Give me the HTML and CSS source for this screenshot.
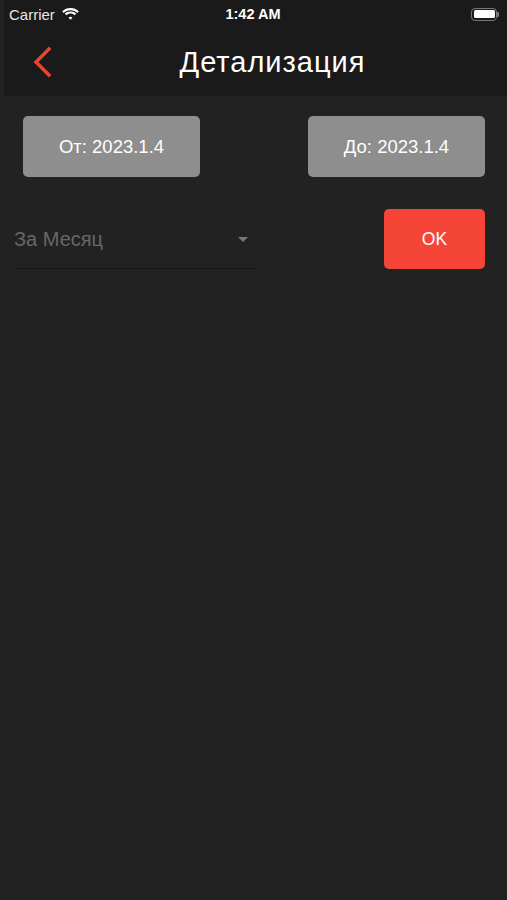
FILE: index.html
```html
<!DOCTYPE html>
<html>
    <head>
        <meta charset="utf-8">
        <link rel="stylesheet" href="styles.css">
    </head>
    <body>
        <div id="header">
            <div id="status">
                <div class="status-left">
                    <span>Carrier</span>
                    <svg width="19" height="14" viewBox="0 0 19 14">
                        <path d="M9.5 3.2c2.6 0 5 1 6.8 2.7l1.5-1.6C15.6 2.2 12.7 1 9.5 1S3.4 2.2 1.2 4.3l1.5 1.6C4.5 4.2 6.9 3.2 9.5 3.2z" fill="#fff"/>
                        <path d="M9.5 6.6c1.6 0 3.1.6 4.2 1.6l1.5-1.6C13.7 5.2 11.7 4.4 9.5 4.4S5.3 5.2 3.8 6.6l1.5 1.6c1.1-1 2.6-1.6 4.2-1.6z" fill="#fff"/>
                        <path d="M9.5 9.8c.8 0 1.4.3 2 .7l-2 2.3-2-2.3c.6-.4 1.2-.7 2-.7z" fill="#fff"/>
                    </svg>
                </div>
                <div class="status-time">1:42 AM</div>
                <div class="status-right">
                    <div class="battery"><div class="battery-fill"></div></div>
                    <div class="battery-tip"></div>
                </div>
            </div>
            <div id="navbar">
                <svg class="back" width="20" height="32" viewBox="0 0 20 32">
                    <path d="M17 3 L4 16 L17 29" fill="none" stroke="#e8452f" stroke-width="3.4" stroke-linecap="square"/>
                </svg>
                <div class="title">Детализация</div>
            </div>
        </div>

        <div id="content">
            <div class="dates">
                <div class="date-btn">От: 2023.1.4</div>
                <div class="date-btn">До: 2023.1.4</div>
            </div>
            <div class="filter">
                <div class="dropdown">
                    <span>За Месяц</span>
                    <div class="caret"></div>
                </div>
                <div class="ok-btn">OK</div>
            </div>
        </div>
    </body>
</html>
```

FILE: styles.css
```css
* {
    box-sizing: border-box;
}
body {
    background-color: #222222;
    margin: 0;
    font-family: "Liberation Sans", Arial, sans-serif;
    color: white;
    height: 900px;
}
#header {
    background-color: #1a1a1a;
    height: 96px;
    margin-left: 4px;
}
#status {
    display: flex;
    align-items: center;
    justify-content: space-between;
    height: 28px;
    padding: 0 8px 0 5px;
    font-size: 15px;
}
.status-left {
    display: flex;
    align-items: center;
    gap: 6px;
    width: 120px;
    color: #e6e6e6;
}
.status-time {
    font-weight: bold;
    font-size: 14.5px;
    margin-right: 2px;
}
.status-right {
    display: flex;
    align-items: center;
    justify-content: flex-end;
    width: 120px;
}
.battery {
    width: 26px;
    height: 13px;
    border: 1.5px solid #777;
    border-radius: 4px;
    padding: 1.5px;
}
.battery-fill {
    background-color: white;
    width: 100%;
    height: 100%;
    border-radius: 1.5px;
}
.battery-tip {
    width: 2px;
    height: 5px;
    background-color: #777;
    border-radius: 0 1px 1px 0;
}
#navbar {
    display: flex;
    align-items: center;
    height: 68px;
    padding-left: 28px;
}
.back {
    display: block;
}
.title {
    flex: 1;
    text-align: center;
    font-size: 29px;
    padding-right: 14px;
    letter-spacing: 1px;
}
#content {
    padding: 20px 22px 0 14px;
}
.dates {
    display: flex;
    justify-content: space-between;
    padding-left: 9px;
}
.date-btn {
    width: 177px;
    height: 61px;
    background-color: #8e8e8e;
    border-radius: 5px;
    display: flex;
    align-items: center;
    justify-content: center;
    font-size: 18.5px;
}
.filter {
    display: flex;
    justify-content: space-between;
    align-items: flex-start;
    margin-top: 32px;
}
.dropdown {
    width: 242px;
    height: 60px;
    border-bottom: 1px solid #151515;
    display: flex;
    align-items: center;
    justify-content: space-between;
    padding: 2px 8px 0 0;
    color: #676767;
    font-size: 20px;
}
.caret {
    width: 0;
    height: 0;
    border-left: 5px solid transparent;
    border-right: 5px solid transparent;
    border-top: 5px solid #767676;
}
.ok-btn {
    width: 101px;
    height: 60px;
    background-color: #f44536;
    border-radius: 5px;
    display: flex;
    align-items: center;
    justify-content: center;
    font-size: 17.5px;
}
```
